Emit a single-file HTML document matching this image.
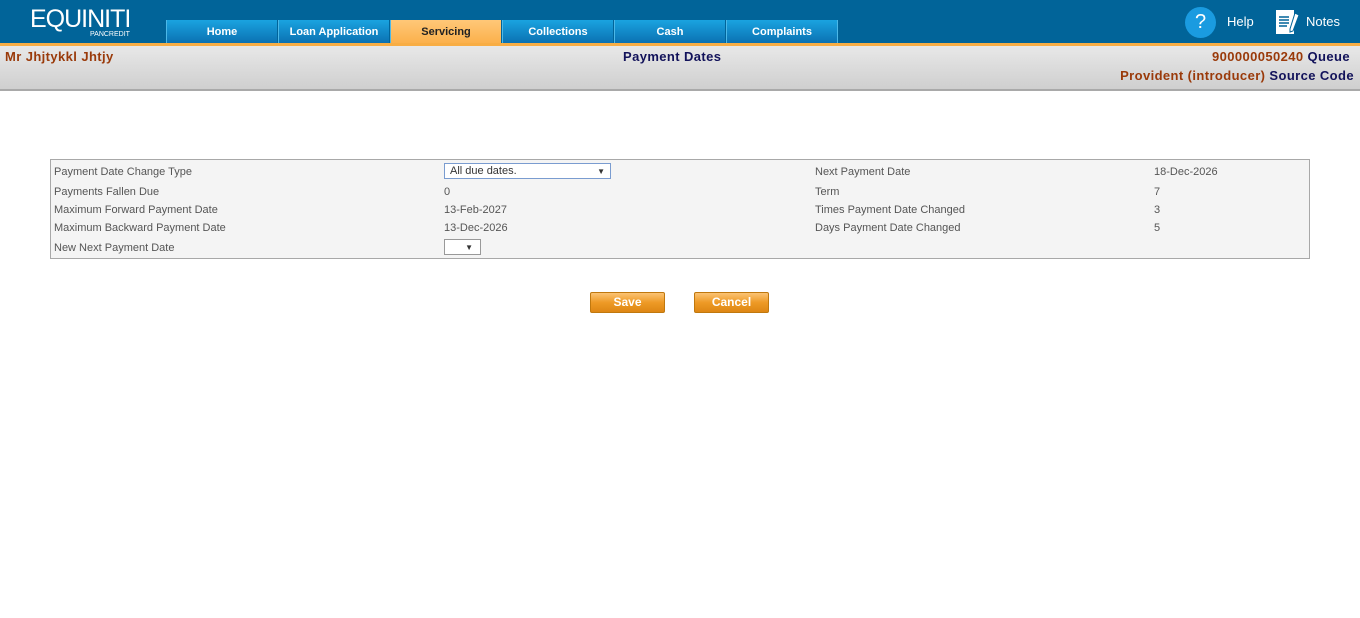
<!DOCTYPE html>
<html><head><meta charset="utf-8"><style>
*{margin:0;padding:0;box-sizing:border-box}
body{width:1360px;height:618px;background:#fff;font-family:"Liberation Sans",Verdana,sans-serif;position:relative;overflow:hidden}
.top{position:absolute;left:0;top:0;width:1360px;height:44px;background:#016499}
.logo{position:absolute;left:30px;top:5px;color:#fff;font-size:25px;letter-spacing:-1px}
.logo2{position:absolute;left:90px;top:31px;color:#fff;font-size:7px}
.tab{position:absolute;top:20px;height:24px;width:111px;background:linear-gradient(#1aa3e0,#0a6fb0);border-left:1px solid #4cb8e8;color:#fff;font-weight:bold;font-size:11px;text-align:center;line-height:24px}
.tab.on{background:linear-gradient(#ffc878,#fbb04a);color:#222}
.orange{position:absolute;top:43px;left:0;width:1360px;height:3px;background:#f8ad44}
.band{position:absolute;top:46px;left:0;width:1360px;height:45px;background:linear-gradient(#e8e8e8,#cfcfcf);border-bottom:2px solid #a9a9a9;font-weight:bold;font-size:13px;letter-spacing:0.4px}
.br{color:#9a3a0a}.nv{color:#12125a}
.box{position:absolute;left:50px;top:159px;width:1260px;height:100px;background:#f4f4f4;border:1px solid #a8a8a8;font-size:11px;color:#555}
.box div{position:absolute}
.sel{border:1px solid #7a9cd0;background:#fff;height:16px;color:#333;padding-left:5px;line-height:15px;font-size:11px}
.btn{position:absolute;top:292px;width:75px;height:21px;background:linear-gradient(#fbc373,#ee9a26 50%,#dd8614);border:1px solid #c0780e;border-radius:2px;color:#fff;font-weight:bold;font-size:12px;text-align:center;line-height:18px}
</style></head><body>
<div class="top">
<div class="logo">EQUINITI</div><div class="logo2">PANCREDIT</div>
<div class="tab" style="left:166px">Home</div>
<div class="tab" style="left:278px">Loan Application</div>
<div class="tab on" style="left:390px">Servicing</div>
<div class="tab" style="left:502px">Collections</div>
<div class="tab" style="left:614px">Cash</div>
<div class="tab" style="left:726px;border-right:1px solid #4cb8e8;width:112px">Complaints</div>
<div style="position:absolute;left:1185px;top:7px;width:31px;height:31px;border-radius:50%;background:#1a9be0;color:#fff;font-size:20px;text-align:center;line-height:31px">?</div>
<div style="position:absolute;left:1227px;top:14px;color:#fff;font-size:13px">Help</div>
<svg style="position:absolute;left:1275px;top:9px" width="28" height="27" viewBox="0 0 28 27"><rect x="1" y="1" width="18" height="24" fill="#fff"/><path d="M4 8h10M4 11h10M4 14h10M4 17h8" stroke="#016499" stroke-width="1.5"/><path d="M20 4l4 2-6 16-3 1 0-3z" fill="#fff" stroke="#016499"/></svg>
<div style="position:absolute;left:1306px;top:14px;color:#fff;font-size:13px">Notes</div>
</div>
<div class="orange"></div>
<div class="band">
<div class="br" style="position:absolute;left:5px;top:3px">Mr Jhjtykkl Jhtjy</div>
<div class="nv" style="position:absolute;left:623px;top:3px">Payment Dates</div>
<div style="position:absolute;right:10px;top:3px"><span class="br">900000050240</span> <span class="nv">Queue</span></div>
<div style="position:absolute;right:6px;top:22px"><span class="br">Provident (introducer)</span> <span class="nv">Source Code</span></div>
</div>
<div class="box">
<div style="left:3px;top:6px">Payment Date Change Type</div>
<div class="sel" style="left:393px;top:3px;width:167px">All due dates.<span style="position:absolute;right:5px;font-size:8px">▼</span></div>
<div style="left:3px;top:26px">Payments Fallen Due</div><div style="left:393px;top:26px">0</div>
<div style="left:3px;top:44px">Maximum Forward Payment Date</div><div style="left:393px;top:44px">13-Feb-2027</div>
<div style="left:3px;top:62px">Maximum Backward Payment Date</div><div style="left:393px;top:62px">13-Dec-2026</div>
<div style="left:3px;top:82px">New Next Payment Date</div>
<div class="sel" style="left:393px;top:79px;width:37px;border-color:#999"><span style="position:absolute;right:7px;font-size:8px">▼</span></div>
<div style="left:764px;top:6px">Next Payment Date</div><div style="left:1103px;top:6px">18-Dec-2026</div>
<div style="left:764px;top:26px">Term</div><div style="left:1103px;top:26px">7</div>
<div style="left:764px;top:44px">Times Payment Date Changed</div><div style="left:1103px;top:44px">3</div>
<div style="left:764px;top:62px">Days Payment Date Changed</div><div style="left:1103px;top:62px">5</div>
</div>
<div class="btn" style="left:590px">Save</div>
<div class="btn" style="left:694px">Cancel</div>
</body></html>
